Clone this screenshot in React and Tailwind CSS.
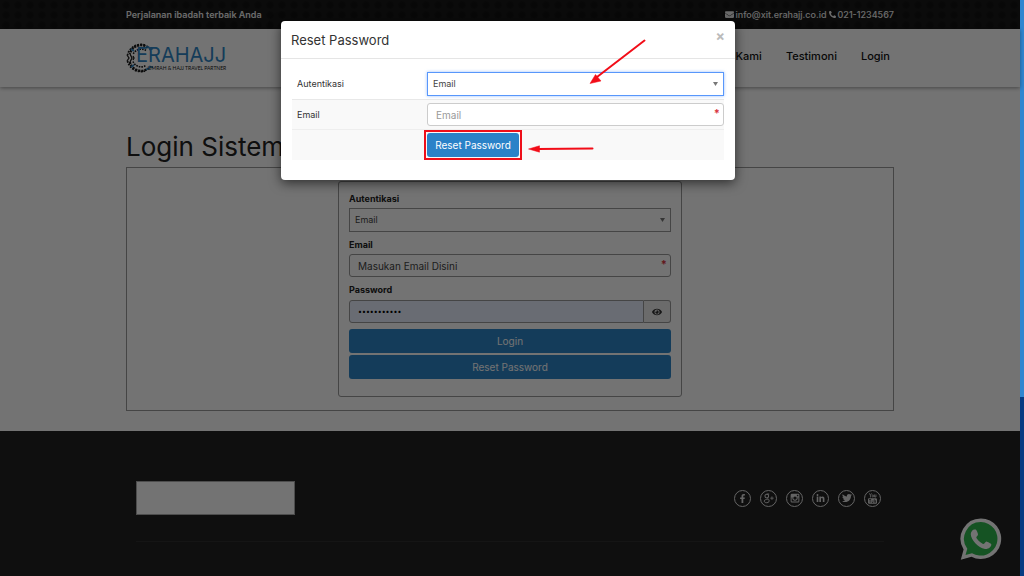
import { useState } from 'react';
import { FaEnvelope, FaPhoneAlt, FaEye, FaFacebookF, FaLinkedinIn, FaTwitter } from 'react-icons/fa';

function Logo() {
  return (
    <a href="#home" className="flex items-center" aria-label="Erahajj">
      <svg viewBox="0 0 28 32" className="h-8 w-7 shrink-0" fill="none">
        <path d="M22 5.500A11.500 11.500 0 0 0 3.800 12M3.800 20A11.500 11.500 0 0 0 22 26.500" stroke="#1c1c1c" strokeWidth="2.400" strokeDasharray="2.200 0.900" />
        <path d="M19 3A14 14 0 0 0 1.500 13M1.500 19A14 14 0 0 0 19 29" stroke="#1c1c1c" strokeWidth="1.800" strokeDasharray="1.800 1.200" />
        <path d="M20 8.500A9 9 0 0 0 7 12.500M7 19.500A9 9 0 0 0 20 23.500" stroke="#1c1c1c" strokeWidth="1.600" strokeDasharray="1.600 1" />
        <path d="M1 13l2 3-2 3M4 12l2 4-2 4M7 14l1 2-1 2" stroke="#1c1c1c" strokeWidth="1.300" />
        <path d="M20 4.500l3 1 1 2 3-1M20 27.500l3-1 1-2 3 1M5 7l3 2M5 25l3-2" stroke="#2f86c6" strokeWidth="1.700" />
      </svg>
      <span className="-ml-[18px] flex flex-col items-end">
        <span className="text-[20px] leading-5 text-[#2f86c6]">ERAHAJJ</span>
        <span className="font-['Lato',sans-serif] text-[5px] leading-[6px] text-[#222]">UMRAH &amp; HAJJ TRAVEL PARTNER</span>
      </span>
    </a>
  );
}

function GooglePlusIcon() {
  return (
    <svg viewBox="0 0 16 16" className="size-[11px]" fill="none" stroke="currentColor">
      <circle cx="5.500" cy="4.500" r="2.700" strokeWidth="1.500" />
      <path d="M5.500 1.500H9M7 7C6 8.500 9 9 9 11.500C9 15 1.800 15 1.800 11.800C1.800 9.500 5 9.300 6.800 9.500" strokeWidth="1.400" />
      <path d="M10.500 7.500h5M13 5v5" strokeWidth="1.200" />
    </svg>
  );
}

function InstagramIcon() {
  return (
    <svg viewBox="0 0 16 16" className="size-[10px]" fill="currentColor">
      <path
        fillRule="evenodd"
        d="M3 1h10a2 2 0 0 1 2 2v10a2 2 0 0 1-2 2H3a2 2 0 0 1-2-2V3a2 2 0 0 1 2-2zM11 2.800v2.400h2.300V2.800zM2.600 7v6.400h10.800V7h-1.300a4.300 4.300 0 1 1-8.200 0zM8 5.400a2.700 2.700 0 1 0 0 5.400 2.700 2.700 0 0 0 0-5.400z"
      />
    </svg>
  );
}

function YoutubeIcon() {
  return (
    <svg viewBox="0 0 16 16" className="size-[11px]" fill="none" stroke="currentColor">
      <path d="M3.500 0.500L5 3.500L6.500 0.500M5 3.500V6.500M11 2.200V5.800H13V2.200" strokeWidth="1.200" />
      <rect x="7.600" y="2.600" width="1.800" height="3.400" rx="0.900" strokeWidth="1.200" />
      <path
        d="M3 7.500h10a1.500 1.500 0 0 1 1.500 1.500v5a1.500 1.500 0 0 1-1.500 1.500H3A1.500 1.500 0 0 1 1.500 14V9A1.500 1.500 0 0 1 3 7.500zM3 9v1h1v4h1v-4h1V9zM7 10.500V14h2v-3.500H8.500V13h-1v-2.500zM10 9v5h1V9zM12 10.500V14h1v-3.500z"
        fill="currentColor"
        fillRule="evenodd"
        stroke="none"
      />
    </svg>
  );
}

function AuthSelect({ id, value, onChange, className }) {
  return (
    <div className="relative">
      <select
        id={id}
        value={value}
        onChange={(e) => onChange(e.target.value)}
        className={`block h-6 w-full appearance-none border bg-white px-[5px] text-[9px] text-[#444] outline-none ${className}`}
      >
        <option value="email">Email</option>
        <option value="phone">No. HP</option>
      </select>
      <svg viewBox="0 0 10 8" className="pointer-events-none absolute top-[10px] right-[6px] h-1 w-[5px]">
        <path d="M0 0h10L5 8z" fill="#777" />
      </svg>
    </div>
  );
}

const socials = [
  { name: 'Facebook', icon: <FaFacebookF className="size-[9px]" /> },
  { name: 'Google Plus', icon: <GooglePlusIcon /> },
  { name: 'Instagram', icon: <InstagramIcon /> },
  { name: 'LinkedIn', icon: <FaLinkedinIn className="size-[9px]" /> },
  { name: 'Twitter', icon: <FaTwitter className="size-[10px]" /> },
  { name: 'YouTube', icon: <YoutubeIcon /> }
];

function LoginCard() {
  const [auth, setAuth] = useState('email');
  const [email, setEmail] = useState('');
  const [password, setPassword] = useState('rahasia1234');
  const [visible, setVisible] = useState(false);

  return (
    <form
      onSubmit={(e) => e.preventDefault()}
      className="mx-auto w-[344px] rounded-[3px] border border-[#999] px-[10px] pt-[10px] pb-[17px]"
    >
      <label htmlFor="auth" className="mb-[2px] block text-[9px] leading-[14px] font-bold text-[#222]">Autentikasi</label>
      <AuthSelect id="auth" value={auth} onChange={setAuth} className="border-[#999]" />

      <label htmlFor="email" className="mt-[6px] mb-[2px] block text-[9px] leading-[14px] font-bold text-[#222]">Email</label>
      <div className="relative">
        <input
          id="email"
          type="email"
          value={email}
          onChange={(e) => setEmail(e.target.value)}
          placeholder="Masukan Email Disini"
          className="block h-[23px] w-full rounded-[3px] border border-[#999] px-2 text-[10px] text-[#444] outline-none placeholder:text-[#444]"
        />
        <span className="absolute top-1 right-1 text-[11px] leading-3 font-bold text-[#d9363e]">*</span>
      </div>

      <label htmlFor="password" className="mt-[6px] mb-[3px] block text-[9px] leading-[14px] font-bold text-[#222]">Password</label>
      <div className="flex">
        <input
          id="password"
          type={visible ? 'text' : 'password'}
          value={password}
          onChange={(e) => setPassword(e.target.value)}
          className="h-[23px] min-w-0 flex-1 rounded-l-[3px] border border-[#999] bg-[#e8f0fe] px-2 text-[7px] text-black outline-none"
        />
        <button
          type="button"
          aria-label="Show password"
          onClick={() => setVisible(!visible)}
          className="flex w-[27px] items-center justify-center rounded-r-[3px] border border-l-0 border-[#999] bg-[#eee] text-[#333]"
        >
          <FaEye className="size-[10px]" />
        </button>
      </div>

      <div className="mt-[6px] flex flex-col gap-[2px] text-[10px] text-white">
        <button type="submit" className="h-6 rounded-[3px] bg-[#2e86c8]">Login</button>
        <button type="button" className="h-6 rounded-[3px] bg-[#2e86c8]">Reset Password</button>
      </div>
    </form>
  );
}

function ResetModal() {
  const [auth, setAuth] = useState('email');
  const [email, setEmail] = useState('');

  return (
    <div role="dialog" aria-label="Reset Password" className="relative h-fit w-[454px] rounded-[4px] bg-white pb-5 shadow-[0_3px_12px_rgba(0,0,0,0.6)]">
      <div className="flex items-start justify-between border-b border-[#e5e5e5] px-[10px] pt-[10px] pb-[9px]">
        <h4 className="text-[13px] leading-[18px] text-[#333]">Reset Password</h4>
        <button type="button" aria-label="Close" className="text-[14px] leading-[10px] font-bold text-[#bbb]">×</button>
      </div>

      <form onSubmit={(e) => e.preventDefault()} className="mx-[11px] mt-[13px] text-[9px] text-[#333]">
        <div className="grid grid-cols-[130px_1fr] items-center pb-[3px] pl-[5px]">
          <label htmlFor="reset-auth">Autentikasi</label>
          <AuthSelect
            id="reset-auth"
            value={auth}
            onChange={setAuth}
            className="border-[#5897fb] shadow-[0_0_3px_rgba(88,151,251,0.6)]"
          />
        </div>
        <div className="grid grid-cols-[130px_1fr] items-center border-t border-[#e8e8e8] bg-[#f9f9f9] pt-[3px] pb-[3px] pl-[5px]">
          <label htmlFor="reset-email">Email</label>
          <div className="relative">
            <input
              id="reset-email"
              type="email"
              value={email}
              onChange={(e) => setEmail(e.target.value)}
              placeholder="Email"
              className="block h-[23px] w-full rounded-[3px] border border-[#ccc] bg-white px-2 text-[10px] outline-none placeholder:text-[#999]"
            />
            <span className="absolute top-1 right-1 text-[11px] leading-3 font-bold text-[#d9363e]">*</span>
          </div>
        </div>
        <div className="border-t border-[#eee] bg-[#f9f9f9] pt-[3px] pb-[3px] pl-[135px]">
          <div className="w-fit outline-2 outline-offset-1 outline-[#ee0f1a]">
            <button type="submit" className="block h-6 w-[92px] rounded-[3px] bg-[#2a82c8] text-[10px] text-white">
              Reset Password
            </button>
          </div>
        </div>
      </form>

      <svg viewBox="0 0 454 160" className="pointer-events-none absolute inset-0 h-40 w-full" fill="#f20d18" stroke="#f20d18">
        <path d="M363.500 19.500L316 56" strokeWidth="2" strokeLinecap="round" fill="none" />
        <path d="M309 62.500L314.500 53.500L320 60Z" strokeWidth="0.500" />
        <path d="M311.500 127.500L257 128" strokeWidth="2" strokeLinecap="round" fill="none" />
        <path d="M247.500 128L258.500 124.800V131.200Z" strokeWidth="0.500" />
      </svg>
    </div>
  );
}

function App() {
  return (
    <div className="flex min-h-screen bg-white font-['Inter','Open_Sans',sans-serif]">
      <div className="relative flex min-w-0 flex-1 flex-col">
        <div className="bg-[#1a1a1a] bg-[radial-gradient(circle,#131313_30%,transparent_60%)] bg-size-[12px_10px]">
          <div className="mx-auto flex h-[29px] w-[768px] max-w-full items-center justify-between text-[9px] font-semibold text-[#eee]">
            <span>Perjalanan ibadah terbaik Anda</span>
            <span className="flex items-center gap-[2px] font-medium">
              <FaEnvelope className="size-[9px]" />
              <span>info@xit.erahajj.co.id</span>
              <FaPhoneAlt className="size-[7px]" />
              <span>021-1234567</span>
            </span>
          </div>
        </div>

        <header className="shadow-[0_1px_4px_rgba(0,0,0,0.4)]">
          <div className="mx-auto flex h-[58px] w-[768px] max-w-full items-center justify-between pr-1">
            <Logo />
            <nav className="flex gap-6 pb-1 text-[11px] font-medium text-[#111]">
              <a href="#tentang">Tentang Kami</a>
              <a href="#testimoni">Testimoni</a>
              <a href="#login">Login</a>
            </nav>
          </div>
        </header>

        <main className="mx-auto w-[768px] max-w-full pt-11 pb-5">
          <h1 className="pb-1 text-[26px] leading-8 text-[#222]">Login Sistem</h1>
          <div className="border border-[#999] py-[13px]">
            <LoginCard />
          </div>
        </main>

        <footer className="flex-1 bg-[#232323]">
          <div className="mx-auto w-[748px] max-w-full pt-[50px]">
            <div className="flex items-center justify-between border-b border-[#303030] pb-[26px]">
              <div className="h-[34px] w-[159px] border border-[#aaa] bg-white" />
              <ul className="flex gap-[9px] pr-[3px]">
                {socials.map((s) => (
                  <li key={s.name}>
                    <a
                      href="#social"
                      aria-label={s.name}
                      className="flex size-[17px] items-center justify-center rounded-full border border-[#ddd] text-[#ddd]"
                    >
                      {s.icon}
                    </a>
                  </li>
                ))}
              </ul>
            </div>
          </div>
        </footer>

        <a href="#whatsapp" aria-label="WhatsApp" className="absolute right-[18px] bottom-4">
          <svg viewBox="0 0 42 42" className="size-[42px]">
            <path d="M21 0.500A20.300 20.300 0 1 1 11.500 38.800L0.800 41.800L3.600 31.500A20.300 20.300 0 0 1 21 0.500Z" fill="#fff" />
            <path d="M21 4A16.800 16.800 0 1 1 12 35.200L5.500 37L7.300 30.800A16.800 16.800 0 0 1 21 4Z" fill="#2fb84f" />
            <path
              d="M14.500 11.500C13 11.300 10.800 13.500 10.800 16.500C11 21.500 18 29.800 25 31C28.500 31.300 31.500 29 31.300 26.300C31.200 25.500 27.500 23.800 26.500 23.500C25.300 23.300 24.800 26 23.500 26C21.500 25.800 16.500 21 16.300 19.500C16.300 18.700 18.200 17.500 18 16.300C17.800 15.200 16.500 12 15.800 11.600Z"
              fill="#fff"
            />
          </svg>
        </a>

        <div className="absolute inset-0 flex justify-center bg-black/55 pt-[21px] pr-1">
          <ResetModal />
        </div>
      </div>

      <div className="flex w-1 flex-col bg-[#063b82]">
        <div className="h-[69%] bg-[#2f86d0]" />
      </div>
    </div>
  );
}

export default App;
